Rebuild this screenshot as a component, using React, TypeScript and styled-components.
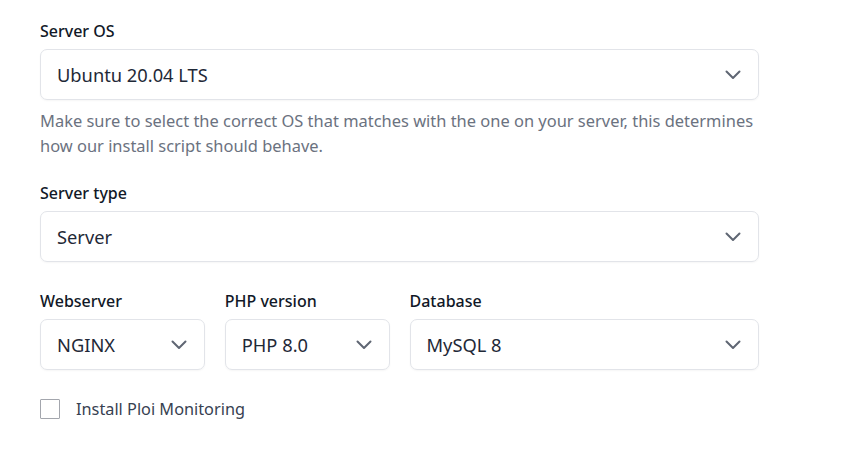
import React from "react";
import styled, { createGlobalStyle } from "styled-components";

const GlobalStyle = createGlobalStyle`
  body {
    margin: 0;
    background: #ffffff;
    font-family: "Noto Sans", "Open Sans", sans-serif;
    color: #111827;
  }
`;

const Form = styled.div`
  width: 719px;
  padding: 19px 0 0 40px;
  display: flex;
  flex-direction: column;
`;

const Field = styled.div<{ $mt?: number }>`
  display: flex;
  flex-direction: column;
  margin-top: ${(p) => p.$mt ?? 0}px;
`;

const Label = styled.label`
  font-size: 16px;
  line-height: 24px;
  font-weight: 500;
  color: #111827;
  margin-bottom: 6px;
`;

const SelectBox = styled.div`
  height: 51px;
  box-sizing: border-box;
  border: 1px solid #e2e4e9;
  border-radius: 7px;
  box-shadow: 0 1px 2px rgba(0, 0, 0, 0.04);
  display: flex;
  align-items: center;
  justify-content: space-between;
  padding: 0 17px 0 16px;
  font-size: 18.3px;
  color: #1f2937;
`;

const Help = styled.p`
  margin: 8px 0 0;
  font-size: 16.45px;
  line-height: 25px;
  color: #6b7280;
`;

const Grid = styled.div`
  display: grid;
  grid-template-columns: repeat(4, 1fr);
  column-gap: 20px;
  margin-top: 27px;
`;

const Cell = styled.div<{ $span?: number }>`
  display: flex;
  flex-direction: column;
  grid-column: span ${(p) => p.$span ?? 1};
`;

const CheckRow = styled.label`
  display: flex;
  align-items: center;
  gap: 16px;
  margin-top: 28px;
  font-size: 16.3px;
  color: #374151;
`;

const Box = styled.span`
  width: 20px;
  height: 20px;
  box-sizing: border-box;
  border: 1.5px solid #a3a6ad;
  border-radius: 1px;
  background: #fff;
`;

const Chevron = () => (
  <svg width="16" height="10" viewBox="0 0 16 10" fill="none">
    <path
      d="M1.5 1.5l6.5 6.5 6.5-6.5"
      stroke="#5f6673"
      strokeWidth="2"
      strokeLinecap="round"
      strokeLinejoin="round"
    />
  </svg>
);

const Select = ({ value }: { value: string }) => (
  <SelectBox>
    <span>{value}</span>
    <Chevron />
  </SelectBox>
);

export default function App() {
  return (
    <>
      <GlobalStyle />
      <Form>
        <Field>
          <Label>Server OS</Label>
          <Select value="Ubuntu 20.04 LTS" />
          <Help>
            Make sure to select the correct OS that matches with the one on your
            server, this determines how our install script should behave.
          </Help>
        </Field>
        <Field $mt={23}>
          <Label>Server type</Label>
          <Select value="Server" />
        </Field>
        <Grid>
          <Cell>
            <Label>Webserver</Label>
            <Select value="NGINX" />
          </Cell>
          <Cell>
            <Label>PHP version</Label>
            <Select value="PHP 8.0" />
          </Cell>
          <Cell $span={2}>
            <Label>Database</Label>
            <Select value="MySQL 8" />
          </Cell>
        </Grid>
        <CheckRow>
          <Box />
          Install Ploi Monitoring
        </CheckRow>
      </Form>
    </>
  );
}
